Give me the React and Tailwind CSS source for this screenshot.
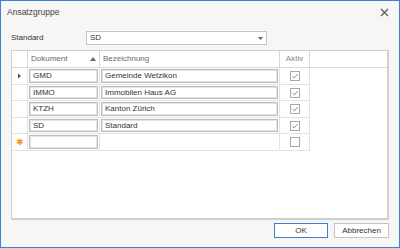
import React from "react";

const rows = [
  { code: "GMD", name: "Gemeinde Wetzikon", active: true, current: true },
  { code: "IMMO", name: "Immobilen Haus AG", active: true },
  { code: "KTZH", name: "Kanton Zürich", active: true },
  { code: "SD", name: "Standard", active: true },
];

const heights = ["h-[17px]", "h-[16px]", "h-[17px]", "h-[16px]", "h-[17px]"];

const Check = ({ checked }) => (
  <div className="w-[10px] h-[10px] border border-[#a8a8a8] bg-white flex items-center justify-center">
    {checked && (
      <svg width="8" height="8" viewBox="0 0 8 8">
        <path d="M1.5 4.2 L3.2 5.8 L6.6 2.2" fill="none" stroke="#8a8a8a" strokeWidth="1" />
      </svg>
    )}
  </div>
);

const Editor = ({ value, w }) => (
  <div
    className={`${w} h-full border border-[#bcbcbc] bg-white flex items-center px-[3px] shadow-[inset_0_0_0_1px_#e4e4e4]`}
  >
    {value}
  </div>
);

const Row = ({ r, h, isNew }) => (
  <div className={`flex ${h} border-b border-[#e3e3e3] w-[298px]`}>
    <div className="w-[16px] flex items-center justify-center border-r border-[#e3e3e3]">
      {r?.current && (
        <svg width="5" height="6" viewBox="0 0 5 6">
          <path d="M1 0.5 L4 3 L1 5.5 Z" fill="#555" />
        </svg>
      )}
      {isNew && <span className="text-[#f7931e] text-[9px] leading-none">✱</span>}
    </div>
    <div className="w-[72px] py-[1px] pl-[1px] pr-[1px] border-r border-[#e3e3e3]">
      <Editor value={r?.code} w="w-full" />
    </div>
    <div className="w-[180px] py-[1px] pl-[1px] pr-[1px] border-r border-[#e3e3e3]">
      {!isNew && <Editor value={r?.name} w="w-full" />}
    </div>
    <div className="w-[30px] flex items-center justify-center border-r border-[#e3e3e3]">
      <Check checked={r?.active} />
    </div>
  </div>
);

export default function App() {
  return (
    <div
      className="w-[400px] h-[248px] bg-[#f6f6f6] border border-[#3b84d0] flex flex-col text-[8px] text-[#333]"
      style={{ fontFamily: '"Liberation Sans", Arial, sans-serif' }}
    >
      <div className="h-[23px] flex items-center justify-between pl-[6px] pr-[10px]">
        <span className="text-[8.5px] text-[#444]">Ansatzgruppe</span>
        <svg width="9" height="9" viewBox="0 0 9 9">
          <path d="M1 1 L8 8 M8 1 L1 8" stroke="#555" strokeWidth="1.1" />
        </svg>
      </div>

      <div className="flex items-center pl-[10px] mt-[7px] h-[14px]">
        <span className="w-[75px]">Standard</span>
        <div className="w-[181px] h-[14px] border border-[#c4c4c4] bg-white flex items-center justify-between px-[3px]">
          <span>SD</span>
          <svg width="5" height="3" viewBox="0 0 5 3">
            <path d="M0 0 L5 0 L2.5 3 Z" fill="#666" />
          </svg>
        </div>
      </div>

      <div className="mx-[10px] mt-[5px] h-[170px] border border-[#cfcfcf] border-r-2 border-b-2 bg-white flex flex-col">
        <div className="h-[17px] flex border-b border-[#d9d9d9] text-[#6a6a6a]">
          <div className="w-[16px] border-r border-[#d9d9d9]" />
          <div className="w-[72px] border-r border-[#d9d9d9] flex items-center justify-between pl-[3px] pr-[3px]">
            <span>Dokument</span>
            <svg width="6" height="4" viewBox="0 0 6 4">
              <path d="M0 4 L3 0 L6 4 Z" fill="#666" />
            </svg>
          </div>
          <div className="w-[180px] border-r border-[#d9d9d9] flex items-center pl-[3px]">
            Bezeichnung
          </div>
          <div className="w-[30px] border-r border-[#d9d9d9] flex items-center justify-center text-[#8a8a8a]">
            Aktiv
          </div>
        </div>
        {rows.map((r, i) => (
          <Row key={r.code} r={r} h={heights[i]} />
        ))}
        <Row isNew h={heights[4]} />
      </div>

      <div className="flex justify-end gap-[6px] mt-[3px] pr-[10px]">
        <button className="w-[54px] h-[15px] border border-[#3b7fd0] bg-white text-[8px]">
          OK
        </button>
        <button className="w-[55px] h-[15px] border border-[#c4c4c4] bg-white text-[8px]">
          Abbrechen
        </button>
      </div>
    </div>
  );
}
